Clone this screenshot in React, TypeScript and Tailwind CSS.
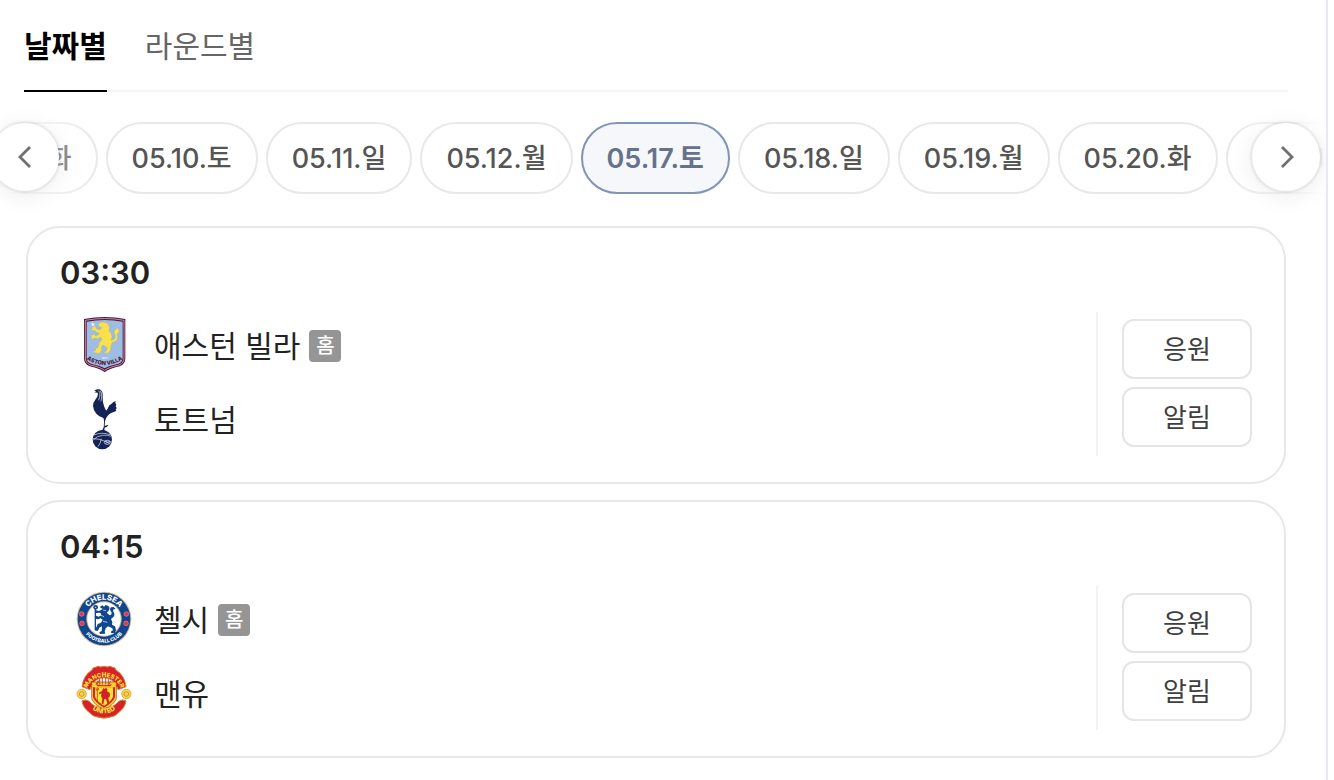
import { useState, type ReactNode } from "react";

const DATES = [
  "05.06.화",
  "05.10.토",
  "05.11.일",
  "05.12.월",
  "05.17.토",
  "05.18.일",
  "05.19.월",
  "05.20.화",
  "05.24.토",
];

function AstonVillaCrest() {
  return (
    <svg viewBox="18 36 168 168" className="h-14 w-14" role="img" aria-label="애스턴 빌라 로고">
      <defs>
        <path id="villa-arc" d="M50 163Q104 197 158 163" />
      </defs>
      <path d="M42 42Q104 30 166 42V160Q166 177 149 184Q116 191 104 202Q92 191 59 184Q42 177 42 160Z" fill="#5b1236" />
      <path d="M46 46Q104 35 162 46V159Q162 174 147 180Q115 187 104 196Q93 187 61 180Q46 174 46 159Z" fill="none" stroke="#d9c5da" strokeWidth="2.2" />
      <path d="M50 50Q104 40 158 50V158Q158 171 145 176Q114 183 104 190Q94 183 63 176Q50 171 50 158Z" fill="#9dbde4" />
      <path d="m68 52 2 4 4-1-2 4 2 4-5-1-4 2 1-5-3-4 4 0Z" fill="#fff" />
      <path
        d="M84 57q6-6 14-6 13 0 18 9 5 9 1 17 8 6 9 16 1 7-3 12 8 1 12-6 3-7-2-13-4-7 2-12l9-7q0 7 4 10-1 8-7 11 5 8 1 15-5 10-16 10 0 8-4 12 3 10-4 16-5 6-14 4l-3-4 7-3 4-7-5-7-9-3-4 5 2 8-6 10-8 3-3-4-8 1-1-5 7-3-2-6 7-1 4-10q-1-6 5-10l5-5-4-7-9 4-9-1-7 3-5-4 4-3-6-2 3-5 5 2 1-5 5 1 2 5 8-2 4-5-9-3-7-6-6 1-4-4 5-2-3-5 6 0 2-5 5 3 1 6 8 4 7-2 1-5-8-1Z"
        fill="#fbe04d"
        stroke="#7fa0bd"
        strokeWidth="1"
      />
      <text fontSize="8" fontWeight="700" textAnchor="middle" x="104" y="162" fill="#e6f0fa">1874</text>
      <text fontSize="17" fontWeight="800" textAnchor="middle" fill="#4e1232">
        <textPath href="#villa-arc" startOffset="50%">ASTON VILLA</textPath>
      </text>
    </svg>
  );
}

function TottenhamCrest() {
  return (
    <svg viewBox="18 21 168 192" className="h-16 w-14" role="img" aria-label="토트넘 로고">
      <path
        d="M73 32Q79 27 88 28Q97 31 98 42V54Q98 68 102 78Q105 87 109 92Q113 88 115 82Q117 74 124 72Q128 66 137 63L136 69L139 74L137 79L140 84L137 89L139 93L131 96Q121 99 115 105Q107 113 105 124L104 138L110 136L116 134L111 140L104 143L103 150L109 156L97 155L88 156L97 150L101 142L102 128Q103 119 100 114Q87 110 79 101Q70 91 69 78Q69 68 75 61L82 50Q85 43 83 38L72 37L79 35Z"
        fill="#132257"
      />
      <path d="M85 32Q91 36 90 45Q89 54 85 61M91 32Q96 38 95 49L93 64" fill="none" stroke="#fff" strokeWidth="2" />
      <circle cx="97" cy="179" r="29" fill="#132257" />
      <path d="M72 165q24-10 48-1M69 176q19 0 34 7 13 7 21 2M70 180q11-13 28-14 15-2 25 3M84 200q8-10 10-24" fill="none" stroke="#fff" strokeWidth="1.8" />
      <ellipse cx="112" cy="187" rx="9" ry="6" fill="none" stroke="#fff" strokeWidth="2" />
      <path d="m106 184 12 7M106 190l12-6" stroke="#fff" strokeWidth="1.3" />
    </svg>
  );
}

function ChelseaCrest() {
  return (
    <svg viewBox="20 27 168 168" className="h-14 w-14" role="img" aria-label="첼시 로고">
      <defs>
        <path id="chelsea-top" d="M46 111A58 58 0 0 1 162 111" />
        <path id="chelsea-bottom" d="M33 111A71 71 0 0 0 175 111" />
      </defs>
      <circle cx="104" cy="111" r="82" fill="#d1c18b" />
      <circle cx="104" cy="111" r="79" fill="#10458f" />
      <circle cx="104" cy="111" r="53" fill="#d1c18b" />
      <circle cx="104" cy="111" r="50" fill="#fff" />
      <g fill="#e6344b" stroke="#f0a5ad" strokeWidth="1.5">
        <circle cx="37" cy="96" r="7" />
        <circle cx="171" cy="96" r="7" />
        <circle cx="38" cy="124" r="7" />
        <circle cx="170" cy="124" r="7" />
      </g>
      <g fill="#fff" textAnchor="middle">
        <text fontSize="23" fontWeight="800">
          <textPath href="#chelsea-top" startOffset="50%">CHELSEA</textPath>
        </text>
        <text fontSize="15" fontWeight="800">
          <textPath href="#chelsea-bottom" startOffset="50%">FOOTBALL CLUB</textPath>
        </text>
      </g>
      <path
        d="M91 75l8-5 5 4 5-5 8 3 4 6-3 8-6 6 9 8q8-2 5-10-7-8-1-14l8-1 6 6-6 1q-4 4 0 9 5 8-1 14l-7 6 4 9-1 8 9 5 3 11-3 9h-12l1-6 5-2-2-6-13-6-7 6-3 10 2 6-16 1-2-5 7-4 1-14-8 4-4 9h-8l-2-6 5-4 4-10 10-4 5-9-6-4-7 3-9-2-2-7 5-2 7 3 8-4-2-7-7-1-8 2-3-5 5-4 8 2 6-3 5-3Z"
        fill="#10458f"
      />
      <path d="m92 99 12 5m-3 14 13 3m-13-37 9 2" stroke="#fff" strokeWidth="2" />
      <path d="M78 75v69" stroke="#10458f" strokeWidth="4" />
      <circle cx="79" cy="76" r="7" fill="#10458f" />
      <circle cx="79" cy="76" r="2" fill="#fff" />
    </svg>
  );
}

function ManUnitedCrest() {
  return (
    <svg viewBox="20 21 168 168" className="h-14 w-14" role="img" aria-label="맨유 로고">
      <defs>
        <path id="united-top" d="M54 90A52 46 0 0 1 154 90" />
        <path id="united-bottom" d="M50 137Q104 196 158 137" />
      </defs>
      <path
        d="M38 86Q42 52 68 36q2-9 11-8 7-6 15-1 10-4 20 0 8-5 15 1 9-1 11 8 26 16 30 50l-24 9Q140 74 126 65q-22-11-44 0-14 9-20 30Z"
        fill="#da2128"
        stroke="#c98a2c"
        strokeWidth="3"
      />
      <path d="M67 72h74v50q-8 20-37 32-29-12-37-32Z" fill="#f5d431" stroke="#a5341c" strokeWidth="2" />
      <path d="M71 88h66v29q-6 17-33 32-27-15-33-32Z" fill="#da2128" />
      <path d="M77 88h54v28q-5 14-27 27-22-13-27-27Z" fill="#f8e32f" />
      <path d="M80 80 85 68m-2 12 7-14m1 14V62m8 18V60m10 20V60m8 20V62m1 18 7-12" stroke="#b83922" strokeWidth="2.5" />
      <path d="M80 79q24 6 48 0l-5 6H85Z" fill="#da2128" />
      <path
        d="M99 96l3-6 4 3 4-4 4 5-1 6 8 4 1 11-5 4 3 18-5 2-5-16-5 1-3 15-5-2 2-15-4-8 2-8-6 3-3-3 5-5 5-1Z"
        fill="#d42127"
      />
      <path d="M84 93v36m-4-34v-5m4 5v-7m4 7v-5m-8 6h8" fill="none" stroke="#ad271c" strokeWidth="2" />
      <g fill="#f9d84a" stroke="#d08a2a" strokeWidth="2">
        <circle cx="37" cy="108" r="14" />
        <circle cx="171" cy="108" r="14" />
      </g>
      <g fill="none" stroke="#e8892a" strokeWidth="3">
        <circle cx="37" cy="108" r="7" />
        <circle cx="171" cy="108" r="7" />
      </g>
      <path
        d="M38 129q11-7 22 1 12 18 44 21 32-3 44-21 11-8 22-1-2 20-24 36-8 10-19 11-23 9-46 0-11-1-19-11-22-16-24-36Z"
        fill="#da2128"
        stroke="#c98a2c"
        strokeWidth="3"
      />
      <g fill="#ffe93c" textAnchor="middle" fontWeight="800">
        <text fontSize="18">
          <textPath href="#united-top" startOffset="50%">MANCHESTER</textPath>
        </text>
        <text fontSize="20">
          <textPath href="#united-bottom" startOffset="50%">UNITED</textPath>
        </text>
      </g>
    </svg>
  );
}

type Team = { name: string; crest: ReactNode; home?: boolean };
type Match = { time: string; teams: Team[] };

const MATCHES: Match[] = [
  {
    time: "03:30",
    teams: [
      { name: "애스턴 빌라", crest: <AstonVillaCrest />, home: true },
      { name: "토트넘", crest: <TottenhamCrest /> },
    ],
  },
  {
    time: "04:15",
    teams: [
      { name: "첼시", crest: <ChelseaCrest />, home: true },
      { name: "맨유", crest: <ManUnitedCrest /> },
    ],
  },
];

function TabButton({ label, active, onClick }: { label: string; active: boolean; onClick: () => void }) {
  return (
    <button
      type="button"
      role="tab"
      aria-selected={active}
      onClick={onClick}
      className={`-mb-0.5 h-[92px] border-b-2 pt-0.5 text-[30px] leading-[88px] ${
        active ? "border-black font-bold text-black" : "border-transparent text-[#666]"
      }`}
    >
      {label}
    </button>
  );
}

function ActionButton({ label }: { label: string }) {
  return (
    <button
      type="button"
      className="h-[60px] w-[130px] rounded-xl border-2 border-[#e4e4e9] bg-white pt-0.5 text-[26px] leading-8 text-[#3f3f41]"
    >
      {label}
    </button>
  );
}

function ArrowButton({ direction }: { direction: "prev" | "next" }) {
  const prev = direction === "prev";
  return (
    <button
      type="button"
      aria-label={prev ? "이전 날짜" : "다음 날짜"}
      className={`absolute top-px flex size-[68px] items-center justify-center rounded-full bg-white shadow-[0_0_2px_2px_rgba(0,0,0,0.07),0_4px_24px_rgba(0,0,0,0.08)] ${
        prev ? "-left-[9px]" : "right-1.5"
      }`}
    >
      <svg viewBox="0 0 24 24" className="size-6" fill="none" stroke="#707070" strokeWidth="2.8" aria-hidden="true">
        <path d={prev ? "M17 2 7 12l10 10" : "m8 2 10 10L8 22"} />
      </svg>
    </button>
  );
}

function MatchCard({ match }: { match: Match }) {
  return (
    <li className="rounded-[34px] border-2 border-[#e8e8e8] px-8 pt-6 pb-[26px]">
      <h2 className="text-[31px] leading-[42px] font-semibold text-[#222]">{match.time}</h2>
      <div className="mt-[18px] flex h-36">
        <ul className="flex flex-1 flex-col gap-2 pl-4">
          {match.teams.map((team) => (
            <li key={team.name} className="flex h-[66px] items-center">
              {team.crest}
              <span className="ml-[22px] pt-0.5 text-[30px] leading-10 text-[#222]">{team.name}</span>
              {team.home && (
                <span className="mt-0.5 ml-[9px] size-8 rounded bg-[#959595] text-center text-[20px] leading-8 font-medium text-white">
                  홈
                </span>
              )}
            </li>
          ))}
        </ul>
        <div className="flex flex-col gap-2 border-l-2 border-[#f3f3f5] pt-[7px] pl-6">
          <ActionButton label="응원" />
          <ActionButton label="알림" />
        </div>
      </div>
    </li>
  );
}

export default function App() {
  const [tab, setTab] = useState("날짜별");
  const [date, setDate] = useState("05.17.토");

  return (
    <main className="mr-1.5 min-h-screen overflow-hidden border-r-2 border-[#e9e9ef] bg-white font-['Inter','Noto_Sans_CJK_KR',sans-serif]">
      <div role="tablist" className="mr-[38px] ml-6 flex gap-[38px] border-b-2 border-[#f4f4f4]">
        {["날짜별", "라운드별"].map((label) => (
          <TabButton key={label} label={label} active={tab === label} onClick={() => setTab(label)} />
        ))}
      </div>

      <nav aria-label="경기 날짜" className="relative mt-[30px]">
        <ul className="-ml-[62px] flex gap-2">
          {DATES.map((d) => (
            <li key={d} className="shrink-0">
              <button
                type="button"
                aria-pressed={date === d}
                onClick={() => setDate(d)}
                className={`h-[72px] rounded-full border-2 px-6 pt-0.5 text-[27px] leading-9 ${
                  date === d
                    ? "border-[#8094b8] bg-[#f5f7fa] font-semibold text-[#66718c]"
                    : "border-[#e8e8e8] bg-white font-medium text-[#555]"
                }`}
              >
                {d}
              </button>
            </li>
          ))}
        </ul>
        <div className="pointer-events-none absolute inset-y-0 left-0 w-[100px] bg-linear-to-r from-white to-transparent" />
        <div className="pointer-events-none absolute inset-y-0 right-0 w-[100px] bg-linear-to-l from-white to-transparent" />
        <ArrowButton direction="prev" />
        <ArrowButton direction="next" />
      </nav>

      <ul className="mt-8 mr-10 ml-[26px] flex flex-col gap-4">
        {MATCHES.map((match) => (
          <MatchCard key={match.time} match={match} />
        ))}
      </ul>
    </main>
  );
}
